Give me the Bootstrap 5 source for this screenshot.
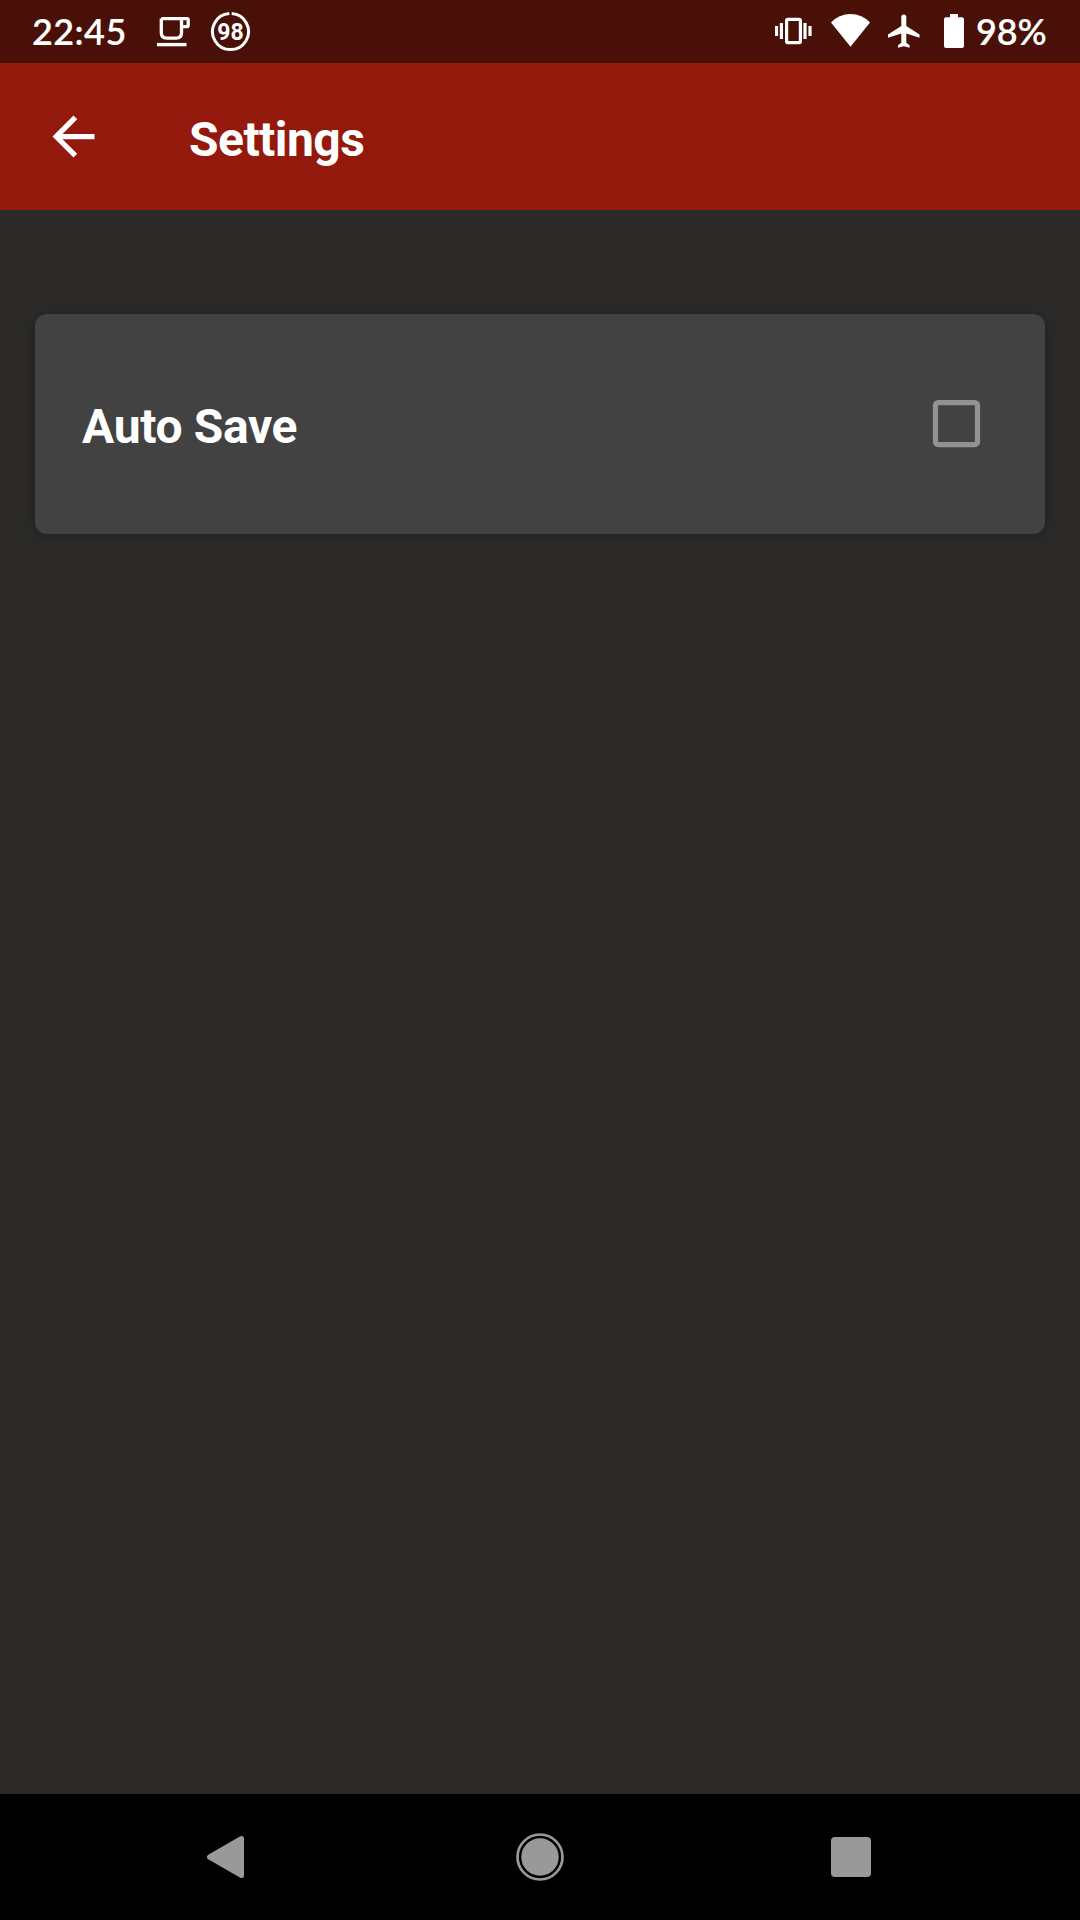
<!DOCTYPE html>
<html lang="en">
<head>
<meta charset="utf-8">
<meta name="viewport" content="width=device-width, initial-scale=1">
<title>Settings</title>
<link rel="stylesheet" href="https://cdn.jsdelivr.net/npm/bootstrap@5.3.0/dist/css/bootstrap.min.css">
<style>
body{background:#2b2a28;font-family:Roboto,sans-serif}
svg{display:block;flex:none}
.screen{width:1080px;height:1920px;overflow:hidden}
.status-bar{height:63px;background:#491007;padding:0 32px;font-family:Lato,sans-serif;font-size:36px;line-height:63px;font-weight:600;-webkit-text-stroke:.15px #fff}
.status-bar svg{-webkit-text-stroke:0}
.clock{width:125px;letter-spacing:.4px}
.level{width:72px;margin-left:11px;letter-spacing:-.1px}
.app-bar{height:147px;background:#93190c;padding:0 42px}
.app-bar .title-text{margin:6px 0 0 84px}
.title-text{font-size:48px;line-height:56px;font-weight:700;letter-spacing:-.55px}
.content-area{padding:104px 35px 0}
.setting-card{height:220px;background:#424242;border-radius:12px;box-shadow:0 2px 12px rgba(0,0,0,.24);padding:0 57.500px 1px 47px}
.setting-card .title-text{padding-top:6px;letter-spacing:-.35px}
.nav-keys{height:126px;background:#000;padding-left:202px}
.home-key{margin-left:266px}
.recents-key{margin-left:263px}
</style>
</head>
<body>
<div class="screen d-flex flex-column text-white">
  <header class="status-bar d-flex flex-shrink-0 justify-content-between">
    <div class="d-flex">
      <span class="clock">22:45</span>
      <svg width="34" height="63" viewBox="157 0 34 63" fill="none" stroke="#fff"><path d="M161.300 18.600H187q1.200 0 1.200 1.200v5.200q0 1.700-1.700 1.700h-5M181.500 18.600v14.200q0 5.400-5.400 5.400h-9.400q-5.400 0-5.400-5.400V18.600" stroke-width="3.300"/><path d="M157 44.600h29.500" stroke-width="3.400"/></svg>
      <svg class="ms-3" width="44" height="63" viewBox="207 0 44 63"><path d="M231.700 13.600A18 18 0 1 1 229.300 13.600" fill="none" stroke="#fff" stroke-width="3"/><text x="230.500" y="39.800" text-anchor="middle" font-family="Roboto,sans-serif" font-size="23" font-weight="700" fill="#fff">98</text></svg>
    </div>
    <div class="d-flex">
      <svg width="56" height="63" viewBox="775 0 56 63" fill="none" stroke="#fff" stroke-width="3.200"><rect x="786.600" y="19.300" width="13.800" height="23.400" rx="1.500"/><path d="M781.400 23v16M805 23v16M776.500 26v10M810 26v10"/></svg>
      <svg width="56" height="63" viewBox="831 0 56 63"><path d="M831 22.500Q839 14 850.500 14T870 22.500L850.500 46.700Z" fill="#fff"/></svg>
      <svg width="57" height="63" viewBox="887 0 57 63"><path d="M919.500 37.700v-3.300L906.300 26V17a2.500 2.500 0 0 0-5 0v9L888 34.400v3.300l13.300-4.100v9.200l-3.300 2.500v2.500l5.800-1.600 5.800 1.600v-2.500l-3.300-2.500v-9.200z" fill="#fff"/></svg>
      <svg width="21" height="63" viewBox="944 0 21 63"><path d="M950 14h8v3.300h4q2 0 2 2V46q0 2-2 2h-16q-2 0-2-2V19.300q0-2 2-2h4z" fill="#fff"/></svg>
      <span class="level">98%</span>
    </div>
  </header>
  <nav class="app-bar d-flex flex-shrink-0 align-items-center" aria-label="App bar">
    <svg width="63" height="63" viewBox="0 0 24 24" fill="#fff"><path d="M20 11H7.830l5.590-5.590L12 4l-8 8 8 8 1.410-1.410L7.830 13H20z"/></svg>
    <h1 class="title-text">Settings</h1>
  </nav>
  <main class="content-area flex-grow-1">
    <div class="setting-card d-flex align-items-center justify-content-between">
      <span class="title-text">Auto Save</span>
      <svg width="63" height="63" viewBox="0 0 24 24" role="checkbox" aria-checked="false"><rect x="4" y="4" width="16" height="16" rx="1" fill="none" stroke="#929292" stroke-width="2"/></svg>
    </div>
  </main>
  <footer class="nav-keys d-flex flex-shrink-0 align-items-center">
    <svg width="48" height="48" viewBox="0 0 48 48"><path d="M7.500 24L39.500 5.500v37z" fill="#999" stroke="#999" stroke-width="5" stroke-linejoin="round"/></svg>
    <svg class="home-key" width="48" height="48" viewBox="0 0 48 48"><circle cx="24" cy="24" r="22.500" fill="none" stroke="#999" stroke-width="2.700"/><circle cx="24" cy="24" r="18.700" fill="#999"/></svg>
    <svg class="recents-key" width="48" height="48" viewBox="0 0 48 48"><rect x="4" y="4" width="40" height="40" rx="4" fill="#999"/></svg>
  </footer>
</div>
<script src="https://cdn.jsdelivr.net/npm/bootstrap@5.3.0/dist/js/bootstrap.bundle.min.js"></script>
</body>
</html>
